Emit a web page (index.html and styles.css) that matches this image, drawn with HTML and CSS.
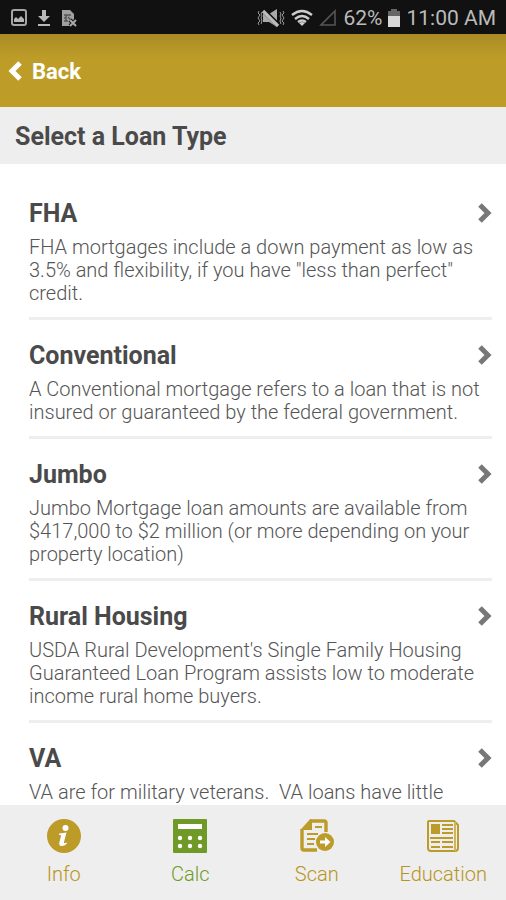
FILE: index.html
```html
<!DOCTYPE html>
<html lang="en">
<head>
  <meta charset="UTF-8">
  <meta name="viewport" content="width=device-width, initial-scale=1">
  <title>Select a Loan Type</title>
  <link rel="stylesheet" href="styles.css">
</head>
<body>
  <div class="status-bar">
    <div class="status-icons">
      <svg width="18" height="18" viewBox="0 0 18 18">
        <rect x="2" y="1" width="14" height="15" rx="2" fill="none" stroke="#a5a5a5" stroke-width="2"/>
        <path d="M4 13V10l2-2 2 2 3-3 3 3v3z" fill="#b5b5b5"/>
      </svg>
      <svg width="14" height="18" viewBox="0 0 14 18">
        <path d="M5 1h4v6h4L7 13 1 7h4z" fill="#b8b8b8"/>
        <path d="M1 15h12v2H1z" fill="#b8b8b8"/>
      </svg>
      <svg width="18" height="18" viewBox="0 0 18 18">
        <path d="M2 1h8l4 4v12H2z" fill="#a0a0a0"/>
        <path d="M4 6h7M4 9h2M8 8l3 3M4 12h4M6 6v6" stroke="#555" stroke-width="1.5"/>
        <path d="M10 11l6 6M16 11l-6 6" stroke="#111" stroke-width="4"/>
        <path d="M10 11l6 6M16 11l-6 6" stroke="#aaa" stroke-width="2"/>
      </svg>
    </div>
    <div class="status-info">
      <svg width="28" height="18" viewBox="0 0 28 18">
        <path d="M6 5h6l8-5v18l-8-5H6z" fill="#aaa"/>
        <path d="M6 1l16 16" stroke="#111" stroke-width="5"/>
        <path d="M6 2l15 15" stroke="#bbb" stroke-width="3.400"/>
        <path d="M2 2l-1 2 2 2-2 3 2 3-2 2 1 2M5 3L4 5l1 2-1 2 1 3-1 3M26 2l1 2-2 2 2 3-2 3 2 2-1 2M23 3l1 2-1 2 1 2-1 3 1 3" fill="none" stroke="#999" stroke-width="1"/>
      </svg>
      <svg width="22" height="18" viewBox="0 0 22 18">
        <path d="M1 6q10-8 20 0M4 10q7-6 14 0M7 13q4-3 8 0" fill="none" stroke="#ccc" stroke-width="2.4"/>
        <path d="M8 14q3-2 6 0l-3 3z" fill="#ccc"/>
      </svg>
      <svg width="18" height="18" viewBox="0 0 18 18">
        <path d="M16 2v14H2z" fill="none" stroke="#555" stroke-width="1.6"/>
      </svg>
      <span class="battery-level">62%</span>
      <svg width="12" height="18" viewBox="0 0 12 18">
        <path d="M3 0h6v2h3v6H0V2h3z" fill="#666"/>
        <path d="M0 7h12v11H0z" fill="#d8d8d8"/>
      </svg>
      <span class="clock">11:00 AM</span>
    </div>
  </div>

  <header class="nav-bar">
    <button class="back-btn" type="button">
      <svg width="14" height="20" viewBox="0 0 14 20">
        <path d="M12 1L4 9l8 8" fill="none" stroke="#fff" stroke-width="5"/>
      </svg>
      Back
    </button>
  </header>

  <h1 class="page-title">Select a Loan Type</h1>

  <main class="loan-list">
    <a class="loan" href="#fha">
      <h2>FHA</h2>
      <svg width="14" height="20" viewBox="0 0 14 20"><path d="M2 1l8 8-8 8" fill="none" stroke="#777" stroke-width="5"/></svg>
      <p>FHA mortgages include a down payment as low as 3.5% and flexibility, if you have "less than perfect" credit.</p>
    </a>
    <a class="loan" href="#conventional">
      <h2>Conventional</h2>
      <svg width="14" height="20" viewBox="0 0 14 20"><path d="M2 1l8 8-8 8" fill="none" stroke="#777" stroke-width="5"/></svg>
      <p>A Conventional mortgage refers to a loan that is not insured or guaranteed by the federal government.</p>
    </a>
    <a class="loan" href="#jumbo">
      <h2>Jumbo</h2>
      <svg width="14" height="20" viewBox="0 0 14 20"><path d="M2 1l8 8-8 8" fill="none" stroke="#777" stroke-width="5"/></svg>
      <p>Jumbo Mortgage loan amounts are available from $417,000 to $2 million (or more depending on your property location)</p>
    </a>
    <a class="loan" href="#rural">
      <h2>Rural Housing</h2>
      <svg width="14" height="20" viewBox="0 0 14 20"><path d="M2 1l8 8-8 8" fill="none" stroke="#777" stroke-width="5"/></svg>
      <p>USDA Rural Development's Single Family Housing Guaranteed Loan Program assists low to moderate income rural home buyers.</p>
    </a>
    <a class="loan" href="#va">
      <h2>VA</h2>
      <svg width="14" height="20" viewBox="0 0 14 20"><path d="M2 1l8 8-8 8" fill="none" stroke="#777" stroke-width="5"/></svg>
      <p>VA are for military veterans.&nbsp; VA loans have little</p>
    </a>
  </main>

  <nav class="tab-bar">
    <a class="tab" href="#info">
      <svg width="34" height="34" viewBox="0 0 34 34">
        <circle cx="17" cy="17" r="17" fill="#bd9b28"/>
        <circle cx="18.500" cy="9" r="3" fill="#fff"/>
        <path d="M12 14.500q4-.5 7.500-1l-2.500 9.500q-.5 2 2.500.5l.5 1q-3 3-6 2.500-2.500-.5-1.500-4l1.500-6q.3-1.300-2-1.300z" fill="#fff"/>
      </svg>
      Info
    </a>
    <a class="tab active" href="#calc">
      <svg width="34" height="34" viewBox="0 0 34 34">
        <rect width="34" height="34" rx="1" fill="#6f9a28"/>
        <path d="M5 5h24v5H5z" fill="#fff"/>
        <g fill="#fff">
          <circle cx="7" cy="19" r="2.200"/><circle cx="17" cy="19" r="2.200"/><circle cx="27" cy="19" r="2.200"/>
          <circle cx="7" cy="27" r="2.200"/><circle cx="17" cy="27" r="2.200"/><circle cx="27" cy="27" r="2.200"/>
        </g>
      </svg>
      Calc
    </a>
    <a class="tab" href="#scan">
      <svg width="34" height="34" viewBox="0 0 34 34">
        <path d="M2 10v19q0 2 2 2h13M10 2h14q2 0 2 2v9" fill="none" stroke="#bd9b28" stroke-width="3.400"/>
        <path d="M.3 11L10 .3h2V11z" fill="#bd9b28"/>
        <path d="M15 8h7M7 15h11M7 20h8M7 25h7" stroke="#bd9b28" stroke-width="2.200"/>
        <circle cx="25" cy="23" r="9" fill="#bd9b28"/>
        <path d="M20 21.500h5V18l5.500 5-5.500 5v-3.500h-5z" fill="#fff"/>
      </svg>
      Scan
    </a>
    <a class="tab" href="#education">
      <svg width="34" height="34" viewBox="0 0 34 34">
        <path d="M3 2h25l4 4v23q0 3-3 3H5q-3 0-3-3V3q0-1 1-1z" fill="none" stroke="#bd9b28" stroke-width="2"/>
        <path d="M29 3v29" stroke="#cdb561" stroke-width="2"/>
        <path d="M5 5h9v10H5z" fill="#bd9b28"/>
        <path d="M16 6h11M16 10h11M16 14h11M4 19h23M5 23h9M16 23h11M5 28h9M16 28h11" stroke="#bd9b28" stroke-width="2"/>
      </svg>
      Education
    </a>
  </nav>
</body>
</html>
```

FILE: styles.css
```css
* {
  box-sizing: border-box;
}
body {
  margin: 0;
  height: 100vh;
  display: flex;
  flex-direction: column;
  font-family: Roboto, sans-serif;
  background: #fff;
  color: #4a4a4a;
}
h1, h2, p {
  margin: 0;
}
a {
  color: inherit;
  text-decoration: none;
}
svg {
  flex: none;
  display: block;
  overflow: visible;
}

/* Status bar */
.status-bar {
  display: flex;
  flex: none;
  align-items: center;
  justify-content: space-between;
  height: 34px;
  padding: 2px 10px 0;
  background: #111;
  color: #bbb;
  font-size: 21px;
}
.status-icons {
  display: flex;
  gap: 9px;
}
.status-info {
  display: flex;
  align-items: center;
  gap: 6px;
}

/* Header */
.nav-bar {
  display: flex;
  flex: none;
  align-items: center;
  height: 73px;
  padding: 2px 8px 0;
  background: linear-gradient(#a98b26, #bd9d28 24px);
}
.back-btn {
  display: flex;
  align-items: center;
  gap: 10px;
  padding: 0;
  border: none;
  background: none;
  color: #fff;
  font-family: inherit;
  font-size: 22px;
  font-weight: 700;
  cursor: pointer;
}
.page-title {
  flex: none;
  padding: 16px 15px 14px;
  background: #eee;
  font-size: 25px;
  line-height: 27px;
  font-weight: 700;
}

/* Loan list */
.loan-list {
  flex: 1;
  min-height: 0;
  padding: 14px 14px 0 29px;
  overflow-y: auto;
  scrollbar-width: none;
}
.loan {
  display: grid;
  grid-template-columns: 1fr auto;
  align-items: center;
  row-gap: 8px;
  padding: 22px 0 12px;
  border-bottom: 3px solid #eee;
}
.loan h2 {
  font-size: 25px;
  line-height: 28px;
  font-weight: 700;
}
.loan p {
  grid-column: 1 / -1;
  font-size: 20px;
  line-height: 23px;
  font-weight: 300;
  color: #555;
}

/* Bottom tabs */
.tab-bar {
  display: grid;
  grid-template-columns: repeat(4, 1fr);
  flex: none;
  height: 95px;
  background: #eee;
}
.tab {
  display: flex;
  flex-direction: column;
  align-items: center;
  gap: 9px;
  padding: 14px 0 0 1px;
  font-size: 20px;
  line-height: 24px;
  font-weight: 300;
  color: #b8941c;
}
.tab.active {
  color: #6f9a28;
}
```
